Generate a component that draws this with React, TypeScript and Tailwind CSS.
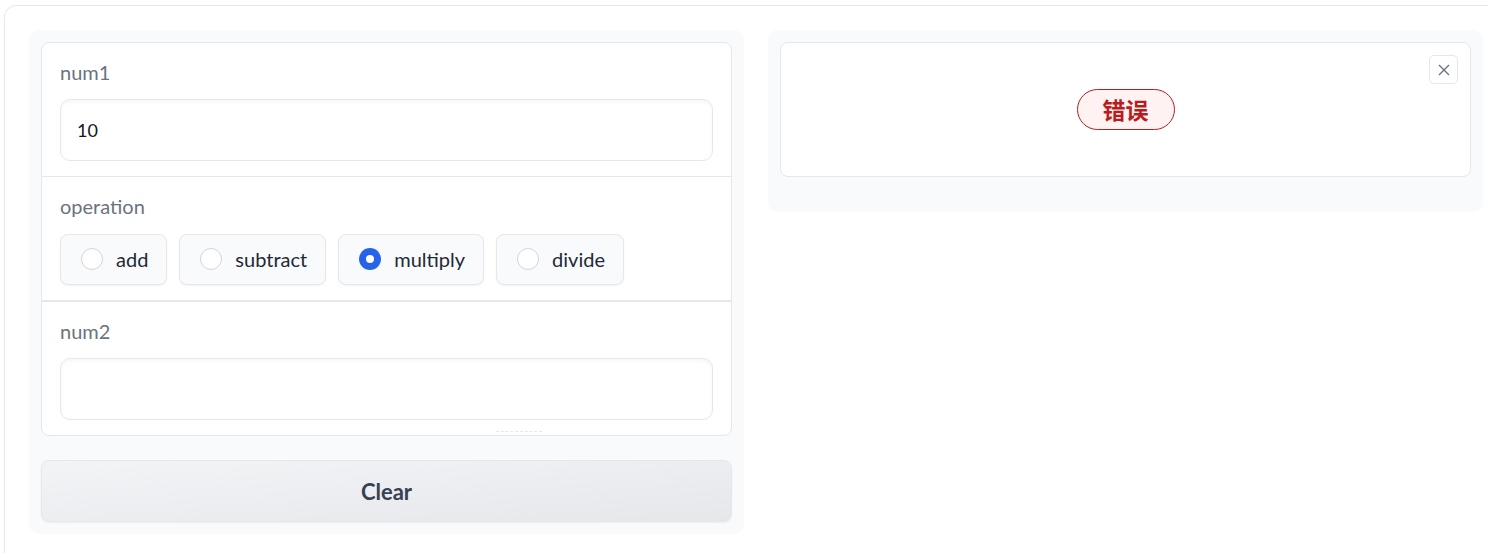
import React from "react";

const font = { fontFamily: "Lato, 'Noto Sans', sans-serif" };

function Radio({ label, checked }: { label: string; checked?: boolean }) {
  return (
    <label className="flex items-center h-[51px] pl-[20px] pr-[18px] gap-[13px] pb-[2px] rounded-[8px] border border-[#e5e7eb] bg-[#f9fafb] shadow-[0_1px_2px_rgba(0,0,0,0.05)]">
      {checked ? (
        <span className="w-[22px] h-[22px] rounded-full bg-[#2563eb] flex items-center justify-center">
          <span className="w-[8px] h-[8px] rounded-full bg-white" />
        </span>
      ) : (
        <span className="w-[22px] h-[22px] rounded-full border border-[#d1d5db] bg-white" />
      )}
      <span className="text-[20px] text-[#1f2937] leading-none">{label}</span>
    </label>
  );
}

function Input({ value }: { value?: string }) {
  return (
    <div className="h-[62px] rounded-[10px] border border-[#e5e7eb] bg-white shadow-[inset_0_2px_4px_rgba(0,0,0,0.04)] flex items-center px-[16px] text-[18px] text-[#111827]">
      {value}
    </div>
  );
}

export default function App() {
  return (
    <div className="w-[1488px] h-[553px] overflow-hidden bg-white" style={font}>
      <div className="ml-[4px] mt-[5px] w-[1520px] h-[600px] border border-[#e5e7eb] rounded-[12px] p-[24px] flex gap-[24px] items-start">
        <div className="w-[715px] bg-[#f9fafb] rounded-[10px] p-[12px] flex flex-col gap-[24px]">
          <div className="relative bg-white border border-[#e5e7eb] rounded-[8px] flex flex-col">
            <div className="px-[18px] pt-[18px] pb-[15px] flex flex-col gap-[16px]">
              <div className="text-[20px] leading-[22px] text-[#6b7280]">num1</div>
              <Input value="10" />
            </div>
            <div className="border-t border-[#e5e7eb] px-[18px] pt-[18px] pb-[15px] flex flex-col gap-[17px]">
              <div className="text-[20px] leading-[22px] text-[#6b7280]">operation</div>
              <div className="flex gap-[12px]">
                <Radio label="add" />
                <Radio label="subtract" />
                <Radio label="multiply" checked />
                <Radio label="divide" />
              </div>
            </div>
            <div className="border-t-2 border-[#e5e7eb] px-[18px] pt-[18px] pb-[15px] flex flex-col gap-[16px]">
              <div className="text-[20px] leading-[22px] text-[#6b7280]">num2</div>
              <Input />
            </div>
            <div className="absolute left-[454px] bottom-[3px] w-[46px] border-t border-dashed border-[#e5e7eb]" />
          </div>
          <button className="h-[62px] rounded-[8px] border border-[#e5e7eb] bg-gradient-to-br from-[#f3f4f6] to-[#e5e7eb] text-[22px] font-bold text-[#374151] shadow-[0_1px_2px_rgba(0,0,0,0.05)]">
            Clear
          </button>
        </div>
        <div className="w-[715px] bg-[#f9fafb] rounded-[10px] pt-[12px] px-[12px] pb-[35px]">
          <div className="relative h-[135px] bg-white border border-[#e5e7eb] rounded-[8px] flex items-center justify-center">
            <span
              className="h-[41px] px-[25px] rounded-full border border-[#b91c1c] bg-[#fef2f2] text-[#b91c1c] text-[23px] font-bold flex items-center"
              style={{ fontFamily: "'Noto Sans CJK SC', sans-serif" }}
            >
              错误
            </span>
            <button className="absolute top-[12px] right-[12px] w-[29px] h-[29px] rounded-[5px] border border-[#e5e7eb] bg-white flex items-center justify-center">
              <svg width="12" height="12" viewBox="0 0 12 12" fill="none" stroke="#6b7280" strokeWidth="1.4">
                <path d="M1 1L11 11M11 1L1 11" />
              </svg>
            </button>
          </div>
        </div>
      </div>
    </div>
  );
}
